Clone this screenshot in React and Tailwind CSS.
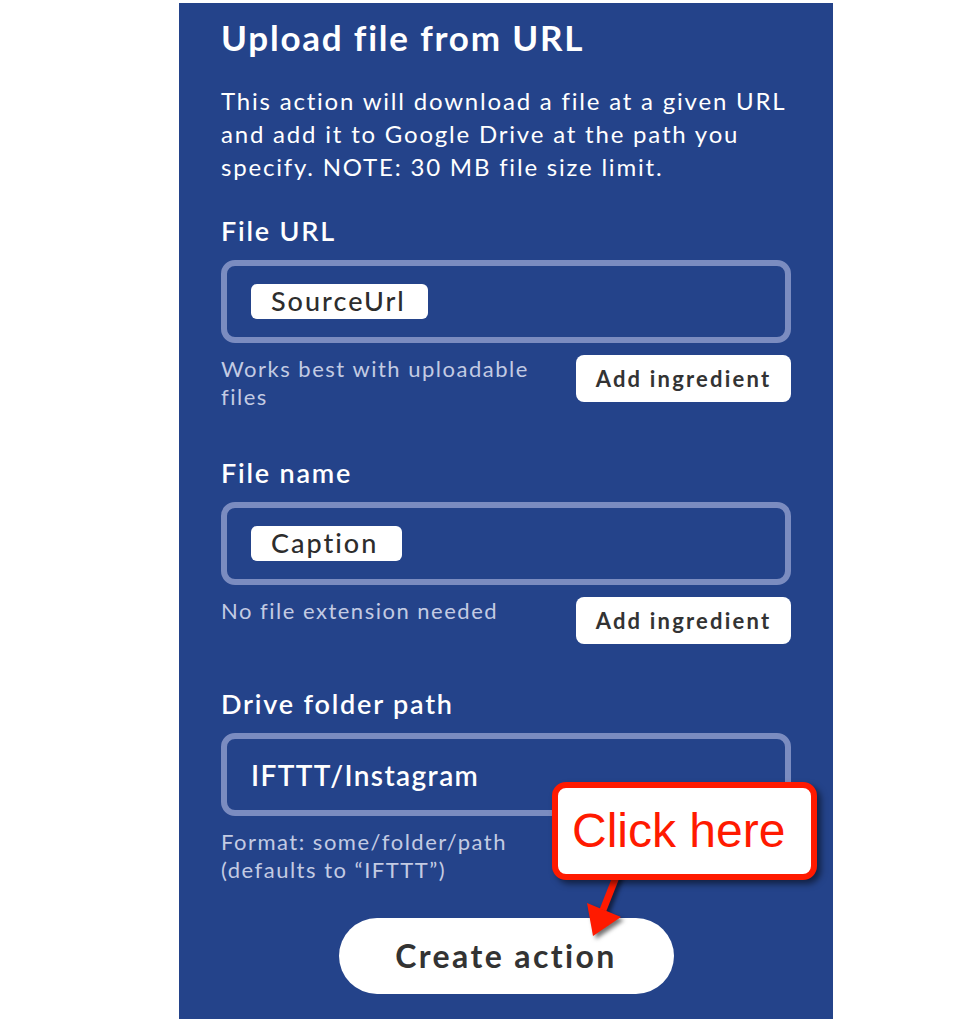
import React from "react";

const helper = "text-[22px] leading-[28px] text-[#c3cbe3] tracking-[1.5px]";
const label = "text-[27px] font-semibold leading-[32px] tracking-[1.8px]";

function Pill({ children, width }) {
  return (
    <span
      className={`inline-flex h-[35px] items-center rounded-[6px] bg-white pl-[20px] text-[27px] font-medium tracking-[2px] text-[#2d2d2d] ${width}`}
    >
      {children}
    </span>
  );
}

function Field({ children }) {
  return (
    <div className="mt-[13px] flex h-[83px] items-center rounded-[14px] border-[6px] border-[#7b8cc0] pl-[24px]">
      {children}
    </div>
  );
}

function AddButton() {
  return (
    <button className="flex h-[47px] w-[215px] shrink-0 items-center justify-center rounded-[8px] bg-white text-[22px] font-bold tracking-[2.2px] text-[#333333]">
      Add ingredient
    </button>
  );
}

export default function App() {
  return (
    <div className="h-[1024px] w-full bg-white pt-[3px] font-['Lato',sans-serif]">
      <div className="relative ml-[179px] flex h-[1016px] w-[654px] flex-col bg-[#24438a] px-[42px] pt-[13px] text-white">
        <h1 className="text-[35px] font-bold leading-[42px] tracking-[1.8px]">Upload file from URL</h1>

        <p className="mt-[26px] text-[24px] leading-[33px] tracking-[1.8px]">
          This action will download a file at a given URL
          <br />
          and add it to Google Drive at the path you
          <br />
          specify. NOTE: 30 MB file size limit.
        </p>

        <div className={`mt-[32px] ${label}`}>File URL</div>
        <Field>
          <Pill width="w-[177px]">SourceUrl</Pill>
        </Field>
        <div className="mt-[12px] flex items-start justify-between">
          <p className={helper}>
            Works best with uploadable
            <br />
            files
          </p>
          <AddButton />
        </div>

        <div className={`mt-[46px] ${label}`}>File name</div>
        <Field>
          <Pill width="w-[151px]">Caption</Pill>
        </Field>
        <div className="mt-[12px] flex items-start justify-between">
          <p className={helper}>No file extension needed</p>
          <AddButton />
        </div>

        <div className={`mt-[44px] ${label}`}>Drive folder path</div>
        <Field>
          <span className="text-[28px] font-semibold tracking-[1.4px]">IFTTT/Instagram</span>
        </Field>
        <p className={`${helper} mt-[12px]`}>
          Format: some/folder/path
          <br />
          (defaults to “IFTTT”)
        </p>

        <div className="mt-[34px] flex justify-center">
          <button className="h-[76px] w-[335px] rounded-full bg-white text-[32px] font-bold tracking-[2.4px] text-[#333333]">
            Create action
          </button>
        </div>

        {/* callout overlay */}
        <svg
          className="absolute left-[396px] top-[867px] h-[75px] w-[60px] drop-shadow-[3px_3px_2px_rgba(0,0,0,0.55)]"
          viewBox="575 870 60 75"
        >
          <line x1="618" y1="872" x2="603" y2="910" stroke="#ff1a00" strokeWidth="7" />
          <polygon points="587,903 621,917 593,936" fill="#ff1a00" />
        </svg>
        <div className="absolute left-[373px] top-[779px] flex h-[98px] w-[265px] items-center rounded-[14px] border-[6px] border-[#ff1a00] bg-white pl-[14px] font-['Liberation_Sans',Arial,sans-serif] text-[48px] leading-none text-[#ff1a00] shadow-[4px_4px_6px_rgba(0,0,0,0.5)]">
          Click here
        </div>
      </div>
    </div>
  );
}
